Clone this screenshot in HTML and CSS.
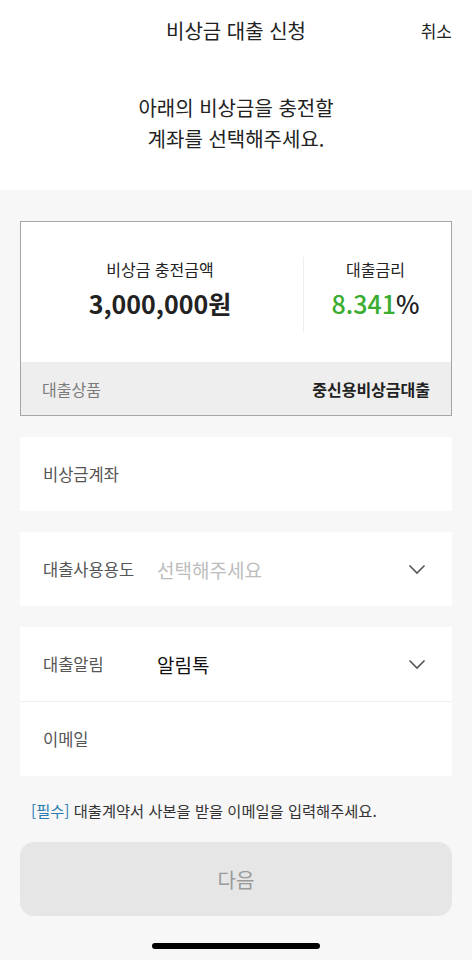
FILE: index.html
```html
<!DOCTYPE html>
<html lang="ko">
<head>
    <meta charset="utf-8">
    <title>비상금 대출 신청</title>
    <link rel="stylesheet" href="styles.css">
</head>
<body>
<div class="top">
    <div class="header">
        <span></span>
        <h1 class="title">비상금 대출 신청</h1>
        <span class="cancel">취소</span>
    </div>
    <p class="intro">아래의 비상금을 충전할<br>계좌를 선택해주세요.</p>
</div>

<div class="main">
    <div class="summary">
        <div class="summaryTop">
            <div class="col">
                <div class="colLabel">비상금 충전금액</div>
                <div class="colValue">3,000,000원</div>
            </div>
            <div class="col colRate">
                <div class="colLabel">대출금리</div>
                <div class="colValue"><span class="green">8.341</span>%</div>
            </div>
        </div>
        <div class="summaryBottom">
            <span class="productLabel">대출상품</span>
            <span class="productName">중신용비상금대출</span>
        </div>
    </div>

    <div class="card">
        <div class="row">
            <span class="label">비상금계좌</span>
        </div>
    </div>

    <div class="card">
        <div class="row">
            <span class="label">대출사용용도</span>
            <span class="value placeholder">선택해주세요</span>
            <svg class="chevron" width="18" height="11" viewBox="0 0 18 11"><path d="M1.5 1.5 L9 9 L16.5 1.5" fill="none" stroke="#555" stroke-width="1.6"/></svg>
        </div>
    </div>

    <div class="card">
        <div class="row">
            <span class="label">대출알림</span>
            <span class="value">알림톡</span>
            <svg class="chevron" width="18" height="11" viewBox="0 0 18 11"><path d="M1.5 1.5 L9 9 L16.5 1.5" fill="none" stroke="#555" stroke-width="1.6"/></svg>
        </div>
        <div class="row rowLine">
            <span class="label">이메일</span>
        </div>
    </div>

    <p class="note"><span class="blue">[필수]</span> 대출계약서 사본을 받을 이메일을 입력해주세요.</p>

    <button class="next" disabled>다음</button>

    <div class="homeBar"></div>
</div>
</body>
</html>
```

FILE: styles.css
```css
* { box-sizing: border-box; }

body {
    margin: 0;
    font-family: "Noto Sans CJK KR", "Noto Sans", sans-serif;
    color: #222;
    background-color: #f7f7f7;
}

.top { background-color: white; }

.header {
    height: 60px;
    display: grid;
    grid-template-columns: 1fr auto 1fr;
    align-items: center;
}
.title { margin: 0; font-size: 20px; font-weight: 400; }
.cancel { justify-self: end; padding-right: 20px; font-size: 17px; }

.intro {
    margin: 0;
    padding: 32px 0 36px;
    text-align: center;
    font-size: 20px;
    line-height: 31px;
}

.main { padding: 31px 20px 0; }

.summary {
    border: 1px solid #a5a5a5;
    background-color: white;
}
.summaryTop {
    display: flex;
    padding: 35px 0 30px;
}
.col {
    flex: 1;
    height: 75px;
    text-align: center;
    padding-right: 4px;
}
.colRate {
    flex: 0 0 148px;
    border-left: 1px solid #eeeeee;
}
.colLabel { font-size: 16px; line-height: 24px; }
.colValue { margin-top: 4px; font-size: 25px; line-height: 36px; font-weight: 700; }
.green { color: #3aad30; font-weight: 500; }
.colRate .colValue { font-weight: 500; }

.summaryBottom {
    height: 53px;
    background-color: #eeeeee;
    display: flex;
    align-items: center;
    justify-content: space-between;
    padding: 0 21px;
    font-size: 16px;
}
.productLabel { color: #7a7a7a; }
.productName { font-weight: 700; color: #222; }

.card {
    margin-top: 21px;
    background-color: white;
    border-radius: 2px;
}
.row {
    height: 74px;
    display: flex;
    align-items: center;
    padding: 0 26px 0 23px;
}
.rowLine { border-top: 1px solid #f0f0f0; height: 75px; }
.label { width: 114px; font-size: 16.5px; color: #555; }
.value { flex: 1; font-size: 19px; color: #111; }
.placeholder { color: #bdbdbd; }
.chevron { display: block; }

.note {
    margin: 23px 0 0 11px;
    font-size: 15.3px;
    line-height: 22px;
    color: #333;
}
.blue { color: #2a7cb3; }

.next {
    display: block;
    width: 100%;
    height: 74px;
    margin-top: 21px;
    border: none;
    border-radius: 14px;
    background-color: #e6e6e6;
    color: #9a9a9a;
    font-family: inherit;
    font-size: 20px;
}

.homeBar {
    width: 168px;
    height: 6px;
    margin: 27px auto 0;
    border-radius: 3px;
    background-color: #000;
}
```
